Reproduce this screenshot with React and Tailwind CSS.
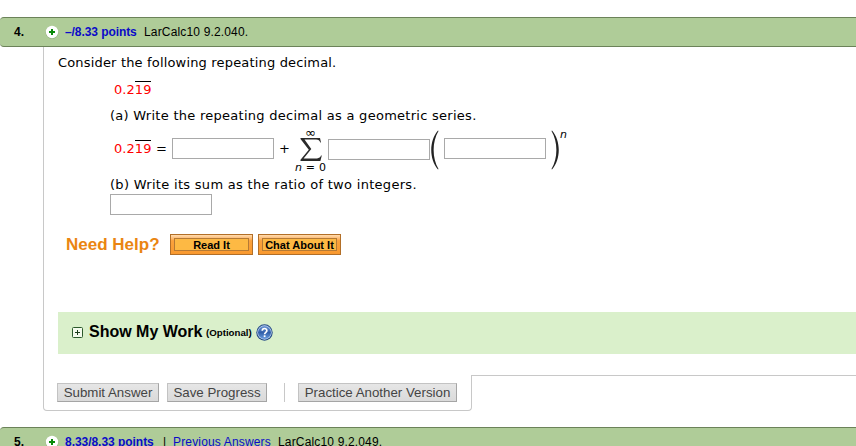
import React from 'react';

const PlusBadge = () => (
    <svg className="w-[14px] h-[14px] shrink-0" viewBox="0 0 14 14">
        <circle cx="7" cy="7.4" r="6.4" fill="#8fae7c" />
        <circle cx="7" cy="7" r="6.2" fill="#ffffff" />
        <path d="M4 7h6M7 4v6" stroke="#0a8a0a" strokeWidth="2" />
    </svg>
);

const QuestionBar = ({ number, children }) => (
    <div className="h-[30px] flex items-center shrink-0 bg-[#afcc98] border-y border-[#6b8259] rounded-l-[4px] pl-[14px] text-[12px] whitespace-nowrap">
        <span className="w-[31px] font-bold">{number}</span>
        <PlusBadge />
        {children}
    </div>
);

const Decimal = () => (
    <span className="relative inline-block w-[37px] text-[#ff0000] tracking-[0.05px]">
        0.219
        <span className="absolute right-0 -top-[1px] w-[16px] h-px bg-black" />
    </span>
);

const AnswerBox = ({ className = '' }) => (
    <input
        type="text"
        className={`block w-[102px] h-[21px] shrink-0 bg-white border border-[#a9a9a9] outline-none ${className}`}
    />
);

const Paren = ({ d, className = '' }) => (
    <svg className={`w-[9px] h-[40px] shrink-0 ${className}`} viewBox="0 0 9 40">
        <path d={d} fill="#222222" />
    </svg>
);

const HelpButton = ({ children }) => (
    <button className="w-[83px] h-[21px] p-[3px] border border-[#b26f28] bg-linear-to-b from-[#ffdcb0] via-[#fba23c] via-30% to-[#f9992f]">
        <span className="flex h-full pt-[2px] items-center justify-center border border-[#b57a35] bg-[#fdb944] text-[11px] leading-none font-bold text-black whitespace-nowrap">
            {children}
        </span>
    </button>
);

const GrayButton = ({ className, children }) => (
    <button
        className={`h-[19px] shrink-0 flex items-center justify-center border border-[#c3c3c3] border-r-[#a5a5a5] border-b-[#a5a5a5] bg-linear-to-b from-[#e6e6e6] to-[#dadada] text-[13.3px] leading-none text-[#444444] whitespace-nowrap ${className}`}
    >
        {children}
    </button>
);

const HelpIcon = () => (
    <svg className="w-[17px] h-[17px] shrink-0" viewBox="0 0 17 17">
        <defs>
            <linearGradient id="helpFill" x1="0" y1="0" x2="0" y2="1">
                <stop offset="0" stopColor="#6f98d6" />
                <stop offset="0.5" stopColor="#315fa9" />
                <stop offset="1" stopColor="#6a9de0" />
            </linearGradient>
        </defs>
        <circle cx="8.5" cy="8.5" r="8.2" fill="#234a85" />
        <circle cx="8.5" cy="8.5" r="7.2" fill="#c2d6f1" />
        <circle cx="8.5" cy="8.5" r="6.5" fill="url(#helpFill)" />
        <path d="M6.2 6.8C6.2 3.7 11 3.8 10.9 6.6C10.8 8.3 8.6 8.3 8.6 10.2" fill="none" stroke="#fff" strokeWidth="1.6" />
        <rect x="7.7" y="11.3" width="1.8" height="1.8" fill="#fff" />
    </svg>
);

export default function App() {
    return (
        <div className="w-full h-[446px] overflow-hidden bg-white pt-[17px] flex flex-col text-black font-['Liberation_Sans',Arial,sans-serif]">
            <QuestionBar number="4.">
                <a className="ml-[6px] w-[79px] font-bold tracking-[-0.08px] text-[#0a0ac8]">–/8.33 points</a>
                <span className="tracking-[0.16px]">LarCalc10 9.2.040.</span>
            </QuestionBar>

            <div className="ml-[43px] h-[328px] shrink-0 border-l border-[#c8c8c8] pl-[14px]">
                <div className="font-['DejaVu_Sans',Verdana,sans-serif] text-[13px] leading-[16px] whitespace-nowrap">
                    <p className="h-[35px] pt-[8px] tracking-[0.17px]">Consider the following repeating decimal.</p>
                    <p className="h-[26px] pl-[56px]"><Decimal /></p>
                    <p className="pl-[52px] h-[22px] tracking-[0.27px]">(a) Write the repeating decimal as a geometric series.</p>

                    {/* Series expression */}
                    <div className="pl-[56px] h-[42px] flex items-start">
                        <span className="pt-[11px]"><Decimal /></span>
                        <span className="w-[21px] pt-[11px] pl-[5px]">=</span>
                        <AnswerBox className="mt-[8px]" />
                        <span className="w-[20px] pt-[11px] pl-[5px]">+</span>
                        <div className="w-[34px] flex flex-col items-center shrink-0">
                            <span className="h-[8px] text-[13px] leading-[5px] -ml-[1px]">∞</span>
                            <svg className="w-[22px] h-[23px] shrink-0 -ml-[1px]" viewBox="0 0 22 23">
                                <path d="M0.5 0H20L21 4.5H20.3C19.6 2.4 18.6 1.4 16 1.4H4.5L11.3 11L3.6 20.4H17C19.2 20.4 20.4 19.4 21 17.6H21.8L20.4 23H0.5V21.8L8.8 11.8L0.5 1Z" fill="#2a2a2a" />
                            </svg>
                            <span className="text-[11px] leading-[14px] tracking-[0.2px] -ml-[1px]"><i>n</i> = 0</span>
                        </div>
                        <AnswerBox className="mt-[9px]" />
                        <Paren d="M8 0.5C-1 11-1 29 8 39.5L8.5 39C2 28.5 2 11.5 8.5 1Z" />
                        <AnswerBox className="ml-[5px] mt-[8px]" />
                        <Paren className="ml-[5px]" d="M1 0.5C10 11 10 29 1 39.5L0.5 39C7 28.5 7 11.5 0.5 1Z" />
                        <i className="text-[11px] leading-[9px]">n</i>
                    </div>

                    <p className="pl-[52px] pt-[5px] h-[22px] tracking-[0.3px]">(b) Write its sum as the ratio of two integers.</p>
                    <AnswerBox className="ml-[52px]" />
                </div>

                <div className="mt-[19px] ml-[8px] h-[21px] flex items-center">
                    <span className="w-[104px] text-[17px] leading-none font-bold text-[#ea8512] whitespace-nowrap">Need Help?</span>
                    <HelpButton>Read It</HelpButton>
                    <span className="w-[5px]" />
                    <HelpButton>Chat About It</HelpButton>
                </div>

                <div className="mt-[57px] h-[42px] bg-[#daf0cb] pl-[14px] pb-[2px] flex items-center whitespace-nowrap">
                    <svg className="w-[11px] h-[11px] shrink-0" viewBox="0 0 11 11">
                        <rect x="0.5" y="0.5" width="10" height="10" rx="1" fill="#f4fbee" stroke="#2c5a2c" />
                        <path d="M3 5.5h5M5.5 3v5" stroke="#1d3d1d" />
                    </svg>
                    <span className="ml-[6px] w-[117px] text-[16px] font-bold">Show My Work</span>
                    <span className="w-[50px] mt-[3px] text-[9.7px] font-bold">(Optional)</span>
                    <HelpIcon />
                </div>
            </div>

            {/* Submit tab */}
            <div className="ml-[43px] h-[36px] shrink-0 flex">
                <div className="w-[429px] shrink-0 border-x border-b border-[#c8c8c8] rounded-b-[4px] pl-[13px] pt-[8px] flex items-start">
                    <GrayButton className="w-[102px]">Submit Answer</GrayButton>
                    <GrayButton className="ml-[8px] w-[100px]">Save Progress</GrayButton>
                    <span className="ml-[17px] mr-[13px] w-px h-[19px] shrink-0 bg-[#c8c8c8]" />
                    <GrayButton className="w-[159px]">Practice Another Version</GrayButton>
                </div>
                <div className="flex-1 h-px bg-[#c8c8c8]" />
            </div>

            <div className="h-[16px] shrink-0" />
            <QuestionBar number="5.">
                <a className="ml-[6px] w-[98px] font-bold tracking-[-0.04px] text-[#0a0ac8]">8.33/8.33 points</a>
                <span className="w-[10px]">|</span>
                <a className="w-[105px] tracking-[0.16px] text-[#0a0ac8]">Previous Answers</a>
                <span className="tracking-[0.16px]">LarCalc10 9.2.049.</span>
            </QuestionBar>
        </div>
    );
}
